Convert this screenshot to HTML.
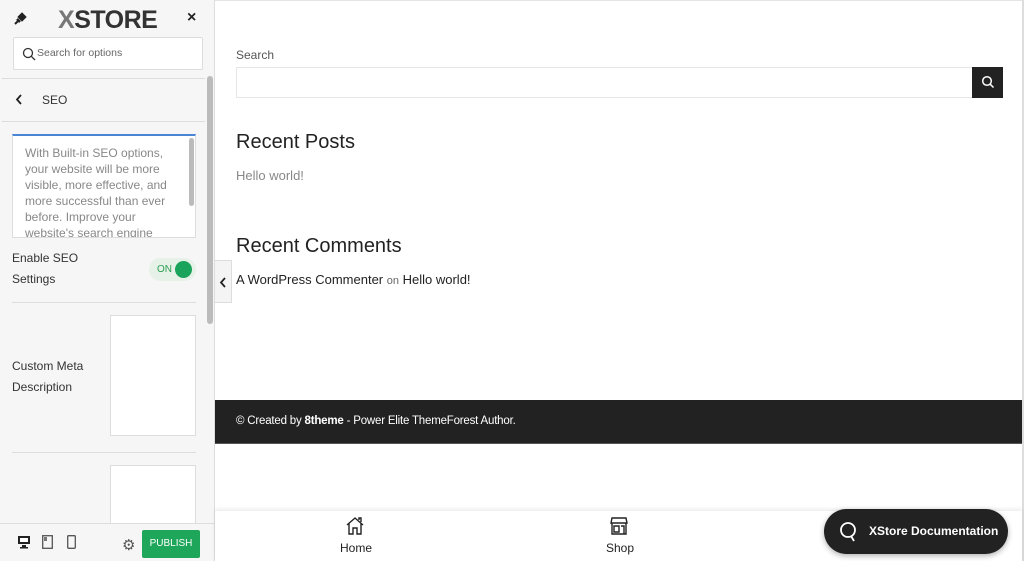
<!DOCTYPE html>
<html><head><meta charset="utf-8"><style>
*{box-sizing:border-box;margin:0;padding:0}
body{width:1024px;height:561px;overflow:hidden;background:#fff;font-family:"Liberation Sans",sans-serif;position:relative}
#side{position:absolute;left:0;top:0;width:215px;height:561px;background:#f6f6f6;border-right:1px solid #ddd}
#main{position:absolute;left:215px;top:0;width:809px;height:561px;background:#fff;border-top:1px solid #e4e4e4;border-right:2px solid #ddd}
.lab{font-size:12px;color:#333;line-height:21px;position:absolute;left:12px}
</style></head><body>
<div id="side">
  <svg style="position:absolute;left:12px;top:11px" width="16" height="16" viewBox="0 0 16 16"><path d="M3 13 L7 9" stroke="#222" stroke-width="2"/><path d="M7 6 L10 3 L13 6 L10 9 Z M5 8 L8 11" stroke="#222" stroke-width="2.4" fill="#222"/></svg>
  <div style="position:absolute;left:58px;top:6px;font:bold 25px 'Liberation Sans',sans-serif;letter-spacing:-0.5px"><span style="color:#777">X</span><span style="color:#333">STORE</span></div>
  <div style="position:absolute;left:187px;top:9px;font-size:16px;color:#222;font-weight:bold">×</div>
  <div style="position:absolute;left:13px;top:37px;width:190px;height:33px;background:#fff;border:1px solid #ddd;border-radius:2px">
    <svg style="position:absolute;left:8px;top:9px" width="14" height="14" viewBox="0 0 14 14"><circle cx="6" cy="6" r="4.5" stroke="#333" stroke-width="1.3" fill="none"/><path d="M9.3 9.3L13 13" stroke="#333" stroke-width="1.3"/></svg>
    <span style="position:absolute;left:23px;top:9px;font-size:10.5px;color:#666">Search for options</span>
  </div>
  <div style="position:absolute;left:2px;top:78px;width:203px;border-top:1px solid #ddd"></div>
  <svg style="position:absolute;left:15px;top:94px" width="8" height="11" viewBox="0 0 8 11"><path d="M6 1 L2 5.5 L6 10" stroke="#222" stroke-width="1.8" fill="none"/></svg>
  <div style="position:absolute;left:42px;top:93px;font-size:12px;color:#333">SEO</div>
  <div style="position:absolute;left:2px;top:121px;width:203px;border-top:1px solid #ddd"></div>
  <div style="position:absolute;left:207px;top:76px;width:6px;height:248px;background:#bbb;border-radius:3px"></div>
  <div style="position:absolute;left:12px;top:134px;width:184px;height:104px;background:#fff;border:1px solid #ddd;border-top:2px solid #4a86d4;overflow:hidden">
    <div style="position:absolute;left:12px;top:9px;width:150px;font-size:12px;line-height:16px;color:#888">With Built-in SEO options, your website will be more visible, more effective, and more successful than ever before. Improve your website's search engine</div>
    <div style="position:absolute;right:1px;top:2px;width:5px;height:68px;background:#bbb;border-radius:3px"></div>
  </div>
  <div class="lab" style="top:248px">Enable SEO<br>Settings</div>
  <div style="position:absolute;left:149px;top:258px;width:47px;height:23px;background:#e6f2e8;border-radius:12px">
    <span style="position:absolute;left:8px;top:6px;font-size:10px;color:#2a9d50">ON</span>
    <div style="position:absolute;right:4px;top:3px;width:17px;height:17px;border-radius:50%;background:#1aa35a"></div>
  </div>
  <div style="position:absolute;left:12px;top:302px;width:184px;border-top:1px solid #ddd"></div>
  <div class="lab" style="top:356px">Custom Meta<br>Description</div>
  <div style="position:absolute;left:110px;top:315px;width:86px;height:121px;background:#fff;border:1px solid #ddd"></div>
  <div style="position:absolute;left:12px;top:452px;width:184px;border-top:1px solid #ddd"></div>
  <div style="position:absolute;left:110px;top:465px;width:86px;height:70px;background:#fff;border:1px solid #ddd"></div>
  <div style="position:absolute;left:0;top:523px;width:214px;height:38px;background:#f6f6f6;border-top:1px solid #ddd">
    <svg style="position:absolute;left:17px;top:11px" width="14" height="14" viewBox="0 0 14 14"><rect x="1" y="1" width="12" height="8" fill="#222"/><rect x="3" y="3" width="8" height="4" fill="#fff"/><rect x="5" y="10" width="4" height="2" fill="#222"/><rect x="3" y="12" width="8" height="1.5" fill="#222"/></svg>
    <svg style="position:absolute;left:42px;top:11px" width="11" height="14" viewBox="0 0 11 14"><rect x="0.7" y="0.7" width="9.6" height="12.6" stroke="#555" stroke-width="1.3" fill="none"/><rect x="2" y="2" width="3" height="4" fill="#777"/></svg>
    <svg style="position:absolute;left:67px;top:11px" width="9" height="14" viewBox="0 0 9 14"><rect x="0.7" y="0.7" width="7.6" height="12.6" rx="1" stroke="#555" stroke-width="1.3" fill="none"/></svg>
    <div style="position:absolute;left:122px;top:12px;font-size:15px;color:#555">⚙</div>
    <div style="position:absolute;left:142px;top:6px;width:58px;height:28px;background:#1ea65a;border-radius:2px;color:#fff;font-size:10px;text-align:center;line-height:28px">PUBLISH</div>
  </div>
</div>
<div id="main">
  <div style="position:absolute;left:21px;top:47px;font-size:12px;color:#555">Search</div>
  <div style="position:absolute;left:21px;top:66px;width:737px;height:31px;border:1px solid #e6e6e6"></div>
  <div style="position:absolute;left:757px;top:66px;width:31px;height:31px;background:#222">
    <svg style="position:absolute;left:9px;top:8px" width="14" height="14" viewBox="0 0 14 14"><circle cx="6" cy="6" r="4.3" stroke="#fff" stroke-width="1.5" fill="none"/><path d="M9.2 9.2L12.5 12.5" stroke="#fff" stroke-width="1.5"/></svg>
  </div>
  <div style="position:absolute;left:21px;top:130px;font-size:20px;color:#222">Recent Posts</div>
  <div style="position:absolute;left:21px;top:167px;font-size:13px;color:#888">Hello world!</div>
  <div style="position:absolute;left:21px;top:234px;font-size:20px;color:#222">Recent Comments</div>
  <div style="position:absolute;left:21px;top:271px;font-size:13px;color:#222">A WordPress Commenter <span style="font-size:11px;color:#666">on</span> Hello world!</div>
  <div style="position:absolute;left:0;top:259px;width:17px;height:43px;background:#f4f4f4;border:1px solid #ddd;border-left:none">
    <svg style="position:absolute;left:4px;top:16px" width="8" height="11" viewBox="0 0 8 11"><path d="M6 1 L2 5.5 L6 10" stroke="#222" stroke-width="1.8" fill="none"/></svg>
  </div>
  <div style="position:absolute;left:0;top:399px;width:807px;height:44px;background:#222;border-bottom:1px solid #555">
    <span style="position:absolute;left:21px;top:15px;font-size:11.5px;color:#fff;letter-spacing:-0.2px">© Created by <b>8theme</b> - Power Elite ThemeForest Author.</span>
  </div>
  <div style="position:absolute;left:0;top:510px;width:807px;height:51px;background:#fff;box-shadow:0 -2px 4px rgba(0,0,0,0.08)">
    <svg style="position:absolute;left:130px;top:5px" width="20" height="20" viewBox="0 0 20 20"><path d="M2 9 L10 2 L18 9 M4 7 V18 H8 V12 H12 V18 H16 V7 M14 4 V2 H16 V6" stroke="#222" stroke-width="1.4" fill="none"/></svg>
    <div style="position:absolute;left:125px;top:30px;font-size:12px;color:#222">Home</div>
    <svg style="position:absolute;left:394px;top:5px" width="20" height="20" viewBox="0 0 20 20"><path d="M3 2 H17 L18 7 H2 Z M3 7 V18 H17 V7 M5 10 H10 V16 H5 Z M12 10 H15 V18" stroke="#222" stroke-width="1.4" fill="none"/></svg>
    <div style="position:absolute;left:391px;top:30px;font-size:12px;color:#222">Shop</div>
  </div>
  <div style="position:absolute;left:609px;top:508px;width:184px;height:45px;background:#222;border-radius:23px;box-shadow:0 2px 6px rgba(0,0,0,0.3)">
    <svg style="position:absolute;left:14px;top:12px" width="22" height="22" viewBox="0 0 22 22"><circle cx="10" cy="9" r="7" stroke="#fff" stroke-width="1.8" fill="none"/><path d="M13 15 L16 20" stroke="#fff" stroke-width="1.8"/></svg>
    <span style="position:absolute;left:45px;top:15px;font-size:12px;font-weight:bold;color:#fff">XStore Documentation</span>
  </div>
</div>
</body></html>
